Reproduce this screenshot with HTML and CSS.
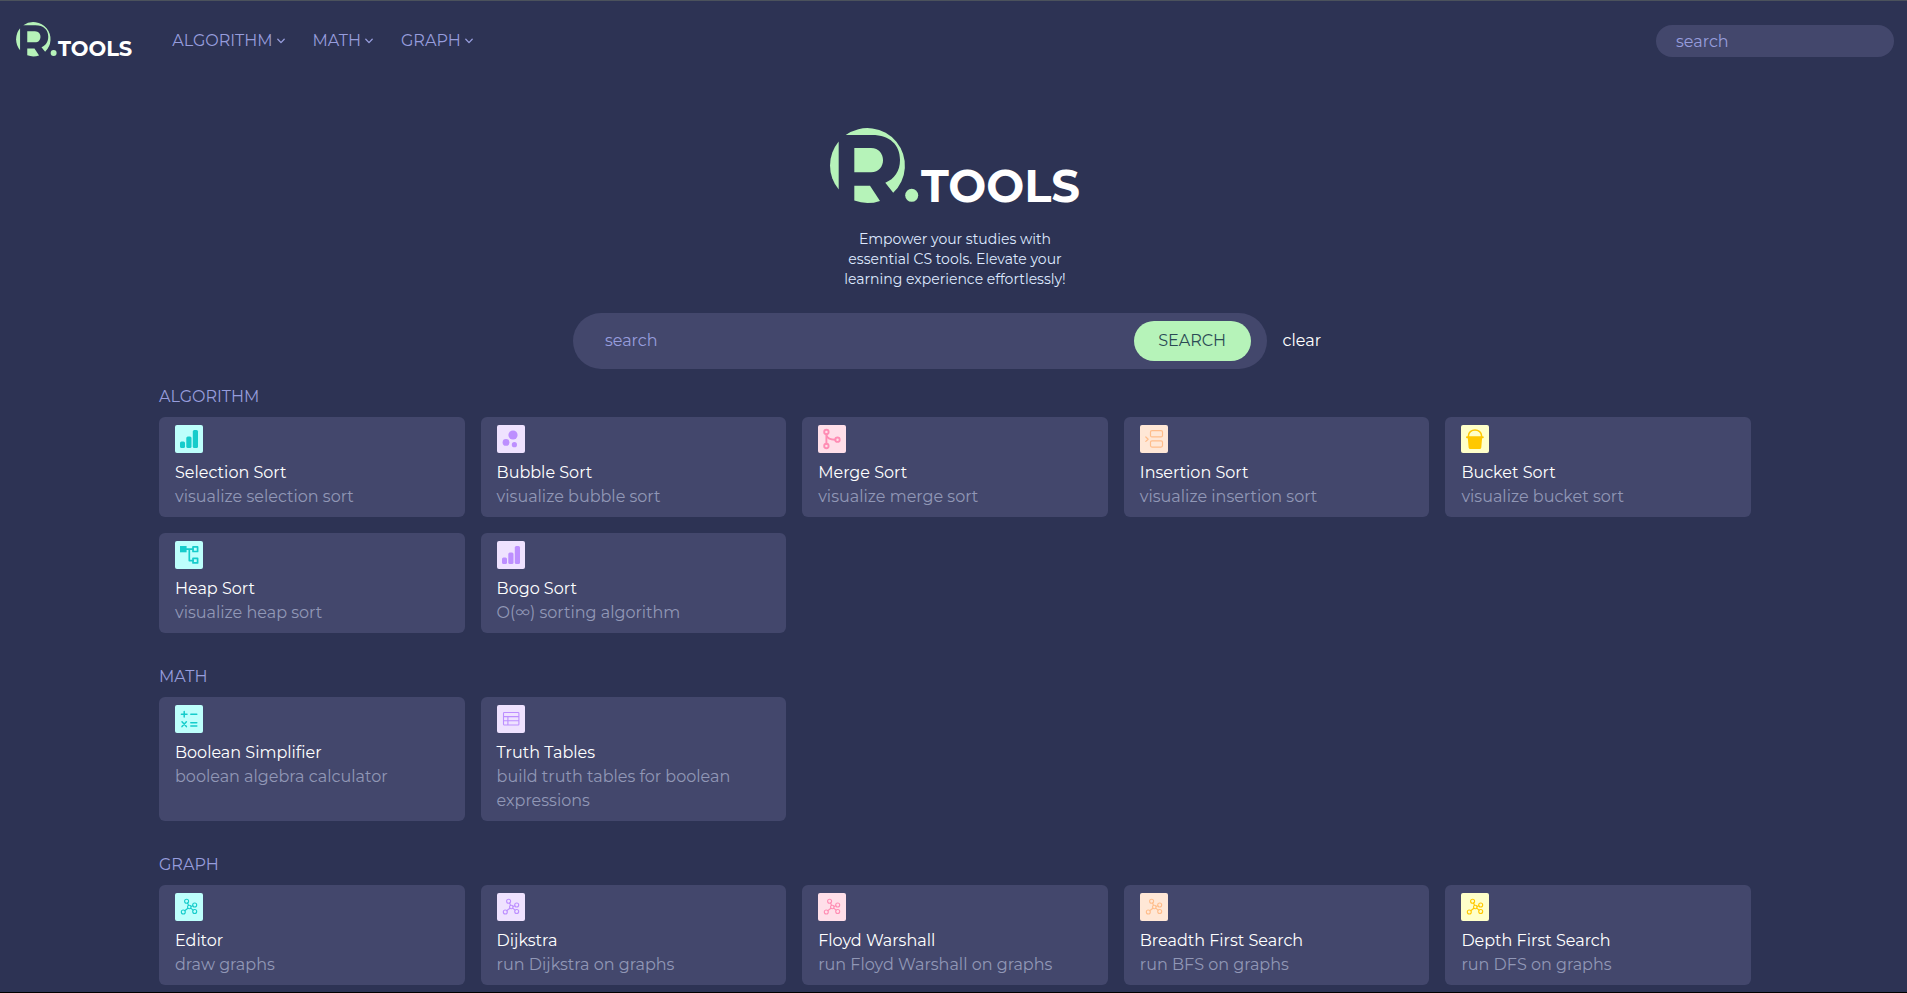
FILE: index.html
```html
<!DOCTYPE html>
<html lang="en">
<head>
<meta charset="utf-8">
<meta name="viewport" content="width=device-width, initial-scale=1">
<title>R.TOOLS</title>
<link rel="stylesheet" href="styles.css">
</head>
<body>
<svg class="sprite" aria-hidden="true">
  <symbol id="mark" viewBox="0 0 91 74" overflow="visible">
    <path d="M8.700 13.500V61.500A37.500 37.500 0 0 1 8.700 13.500z"/>
    <path d="M15.700 7H42C60 7 70 17 70 32C70 43 64.500 51 55.300 54.700L63.200 64.800A37.500 37.500 0 0 0 15.700 7z"/>
    <path d="M24.300 20H41C57 20 57 44.300 41 44.300H24.300z"/>
    <path d="M24.300 57.700H40L50 72.900A37.500 37.500 0 0 1 24.300 72.600z"/>
    <circle cx="81.700" cy="67.300" r="6.500"/>
  </symbol>
  <symbol id="chevron" viewBox="0 0 8 8"><path class="line" stroke-width="1.300" d="M.8 2.300 4 5.600 7.200 2.300"/></symbol>
  <symbol id="bars" viewBox="0 0 28 28"><rect x="5" y="16.500" width="5" height="6.500" rx="1.500"/><rect x="11.300" y="11.500" width="5.200" height="11.500" rx="1.500"/><rect x="17.800" y="5" width="5.200" height="18" rx="1.500"/></symbol>
  <symbol id="bubbles" viewBox="0 0 28 28"><circle cx="16" cy="10" r="4.600"/><circle cx="9" cy="17.400" r="3.400"/><circle cx="17.400" cy="19.700" r="2.600"/></symbol>
  <symbol id="merge" viewBox="0 0 28 28"><g class="line" stroke-width="1.900"><circle cx="8.400" cy="7" r="2.200"/><circle cx="8.400" cy="21" r="2.200"/><circle cx="19.500" cy="14.700" r="2.200"/><path d="M8.400 9.200v9.600M8.400 9.800c.6 3.600 3 4.900 8.900 4.900"/></g></symbol>
  <symbol id="insert" viewBox="0 0 28 28"><g class="line" stroke-width="1.200"><rect x="10.500" y="5.600" width="12" height="6.300" rx="1.500"/><rect x="10.500" y="15.800" width="12" height="6.300" rx="1.500"/><path d="m5.800 12 2.400 2.200-2.400 2.200"/></g></symbol>
  <symbol id="bucket" viewBox="0 0 28 28"><path class="line" stroke-width="1.500" d="M7.500 12V10.500a6.500 5.500 0 0 1 13 0V12"/><rect x="5" y="11.300" width="17.800" height="2" rx="1"/><path d="M6.800 13h14.300l-.8 9.500a1.800 1.800 0 0 1-1.800 1.600H9.400a1.800 1.800 0 0 1-1.800-1.600z"/></symbol>
  <symbol id="tree" viewBox="0 0 28 28"><rect x="5" y="5" width="6.600" height="6.300"/><g class="line" stroke-width="1.700"><rect x="18" y="5.900" width="4.600" height="4.600"/><rect x="18" y="17.300" width="4.600" height="4.600"/><path d="M11 8.200h7M14.300 8.200v11.400H18"/></g></symbol>
  <symbol id="ops" viewBox="0 0 28 28"><path class="line" stroke-width="1.500" d="M6.400 9.200h5.600M9.200 6.400V12M15.800 9.200h6M7 16.800l4.400 4.800M11.400 16.800 7 21.600M15.800 17.700h6M15.800 20.900h6"/></symbol>
  <symbol id="table" viewBox="0 0 28 28"><path class="line" stroke-width="1.100" d="M7.300 7.500h13.800a.8.800 0 0 1 .8.800v10.900a.8.800 0 0 1-.8.800H7.300a.8.800 0 0 1-.8-.8V8.300a.8.800 0 0 1 .8-.8zM6.500 11.600h15.400M6.500 15.800h15.400M10.900 11.600V20"/></symbol>
  <symbol id="nodes" viewBox="0 0 28 28"><g class="line" stroke-width="1.100"><circle cx="11.600" cy="8.300" r="2"/><circle cx="14.300" cy="14" r="1.800"/><circle cx="19.700" cy="12" r="2"/><circle cx="8.300" cy="19" r="2"/><circle cx="19.700" cy="18.500" r="2"/><path d="m12.500 10.100 1 2.200M16 13.400l1.800-.7M12.900 15.200l-3.200 2.500M15.700 15.100l2.400 2.100"/></g></symbol>
</svg>

<header class="topbar">
  <a class="logo logo-small" href="#"><svg class="logo-mark" aria-hidden="true"><use href="#mark"/></svg>TOOLS</a>
  <nav class="menu">
    <button class="menu-item" type="button">ALGORITHM<svg class="chevron"><use href="#chevron"/></svg></button>
    <button class="menu-item" type="button">MATH<svg class="chevron"><use href="#chevron"/></svg></button>
    <button class="menu-item" type="button">GRAPH<svg class="chevron"><use href="#chevron"/></svg></button>
  </nav>
  <input class="nav-search" type="text" placeholder="search" aria-label="Search tools">
</header>

<main class="page">
  <section class="hero">
    <h1 class="logo logo-large"><svg class="logo-mark" aria-hidden="true"><use href="#mark"/></svg>TOOLS</h1>
    <p class="tagline">Empower your studies with essential CS tools. Elevate your learning experience effortlessly!</p>
    <form class="search">
      <div class="search-box">
        <input class="search-input" type="text" placeholder="search" aria-label="Search">
        <button class="search-button" type="button">SEARCH</button>
      </div>
      <button class="clear" type="reset">clear</button>
    </form>
  </section>

  <section class="group">
    <h2 class="group-title">ALGORITHM</h2>
    <div class="cards">
      <a class="card" href="#"><svg class="icon cyan"><use href="#bars"/></svg><span class="name">Selection Sort</span><span class="desc">visualize selection sort</span></a>
      <a class="card" href="#"><svg class="icon purple"><use href="#bubbles"/></svg><span class="name">Bubble Sort</span><span class="desc">visualize bubble sort</span></a>
      <a class="card" href="#"><svg class="icon pink"><use href="#merge"/></svg><span class="name">Merge Sort</span><span class="desc">visualize merge sort</span></a>
      <a class="card" href="#"><svg class="icon orange"><use href="#insert"/></svg><span class="name">Insertion Sort</span><span class="desc">visualize insertion sort</span></a>
      <a class="card" href="#"><svg class="icon yellow"><use href="#bucket"/></svg><span class="name">Bucket Sort</span><span class="desc">visualize bucket sort</span></a>
      <a class="card" href="#"><svg class="icon cyan"><use href="#tree"/></svg><span class="name">Heap Sort</span><span class="desc">visualize heap sort</span></a>
      <a class="card" href="#"><svg class="icon purple"><use href="#bars"/></svg><span class="name">Bogo Sort</span><span class="desc">O(∞) sorting algorithm</span></a>
    </div>
  </section>

  <section class="group">
    <h2 class="group-title">MATH</h2>
    <div class="cards">
      <a class="card" href="#"><svg class="icon cyan"><use href="#ops"/></svg><span class="name">Boolean Simplifier</span><span class="desc">boolean algebra calculator</span></a>
      <a class="card" href="#"><svg class="icon purple"><use href="#table"/></svg><span class="name">Truth Tables</span><span class="desc">build truth tables for boolean expressions</span></a>
    </div>
  </section>

  <section class="group">
    <h2 class="group-title">GRAPH</h2>
    <div class="cards">
      <a class="card" href="#"><svg class="icon cyan"><use href="#nodes"/></svg><span class="name">Editor</span><span class="desc">draw graphs</span></a>
      <a class="card" href="#"><svg class="icon purple"><use href="#nodes"/></svg><span class="name">Dijkstra</span><span class="desc">run Dijkstra on graphs</span></a>
      <a class="card" href="#"><svg class="icon pink"><use href="#nodes"/></svg><span class="name">Floyd Warshall</span><span class="desc">run Floyd Warshall on graphs</span></a>
      <a class="card" href="#"><svg class="icon orange"><use href="#nodes"/></svg><span class="name">Breadth First Search</span><span class="desc">run BFS on graphs</span></a>
      <a class="card" href="#"><svg class="icon yellow"><use href="#nodes"/></svg><span class="name">Depth First Search</span><span class="desc">run DFS on graphs</span></a>
    </div>
  </section>
</main>
</body>
</html>
```
FILE: styles.css
```css
:root {
  --bg: #2d3354;
  --surface: #43476c;
  --accent: #b6f3b9;
  --lavender: #979ddd;
  --muted: #9197b6;
}

* { box-sizing: border-box; }

body {
  margin: 0;
  min-height: 100vh;
  border-top: 1px solid #4b525c;
  border-bottom: 1px solid #000;
  background: var(--bg);
  color: #fff;
  font: 400 16px/24px Montserrat, Inter, sans-serif;
}

button, input {
  border: 0;
  background: none;
  color: inherit;
  font: inherit;
}

button { padding: 0; cursor: pointer; }
input:focus { outline: none; }
input::placeholder { color: var(--lavender); opacity: 1; }

.sprite { position: absolute; width: 0; height: 0; }
.line { fill: none; stroke: currentColor; stroke-linecap: round; stroke-linejoin: round; }

.logo {
  display: flex;
  align-items: baseline;
  margin: 0;
  color: #fff;
  font-weight: 700;
  line-height: 1;
  text-decoration: none;
}

.logo-mark { overflow: visible; fill: var(--accent); }
.logo-small { padding-bottom: 2px; font-size: 21px; }
.logo-small .logo-mark { width: 42px; height: 34px; }
.logo-large { font-size: 45px; }
.logo-large .logo-mark { width: 91px; height: 74px; }

.topbar {
  display: flex;
  align-items: center;
  height: 80px;
  padding: 0 13px 0 16px;
}

.menu { display: flex; gap: 28px; margin-left: 40px; color: var(--lavender); }
.menu-item { display: flex; align-items: center; gap: 4px; }
.chevron { width: 8px; height: 8px; }

.nav-search {
  width: 238px;
  height: 32px;
  margin-left: auto;
  padding: 0 20px;
  border-radius: 16px;
  background: var(--surface);
}

.page { padding: 0 156px 7px 159px; }

.hero {
  display: flex;
  flex-direction: column;
  align-items: center;
  padding-top: 47px;
}

.tagline {
  width: 232px;
  margin: 21px 0 24px;
  color: #dfe9ff;
  font-size: 14px;
  line-height: 20px;
  text-align: center;
}

.search { display: flex; align-items: center; width: 48%; }

.search-box {
  display: flex;
  flex: 1;
  align-items: center;
  height: 56px;
  padding: 0 16px 0 32px;
  border-radius: 28px;
  background: var(--surface);
}

.search-input { flex: 1; min-width: 0; padding: 0; }

.search-button {
  width: 117px;
  height: 40px;
  border-radius: 20px;
  background: var(--accent);
  color: #2b4a55;
}

.clear { padding: 0 16px; }

.group { margin-top: 32px; }
.hero + .group { margin-top: 16px; }

.group-title {
  margin: 0 0 8px;
  color: var(--lavender);
  font-size: 16px;
  font-weight: 400;
  line-height: 24px;
}

.cards {
  display: grid;
  grid-template-columns: repeat(5, minmax(0, 1fr));
  gap: 16px;
}

.card {
  display: flex;
  flex-direction: column;
  padding: 8px 16px;
  border-radius: 6px;
  background: var(--surface);
  color: #fff;
  text-decoration: none;
}

.icon {
  width: 28px;
  height: 28px;
  margin-bottom: 8px;
  border-radius: 2px;
  fill: currentColor;
}

.desc { color: var(--muted); }

.cyan { background: #bdfffc; color: #16cccb; }
.purple { background: #efe2ff; color: #bd8fff; }
.pink { background: #ffdfe9; color: #ff8db4; }
.orange { background: #ffe7d6; color: #ffbd8b; }
.yellow { background: #ffffc9; color: #ffc800; }
```
